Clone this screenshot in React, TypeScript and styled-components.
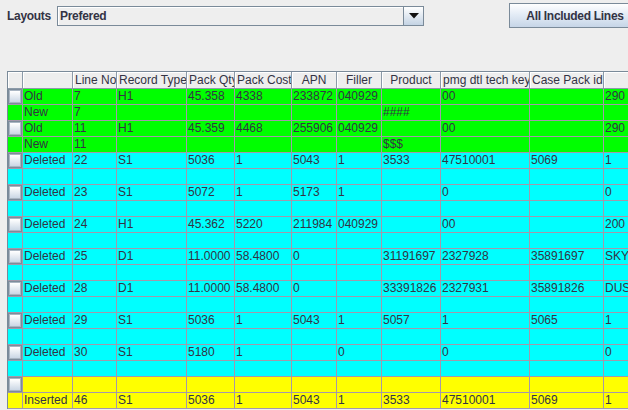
import React from "react";
import styled, { createGlobalStyle } from "styled-components";

const GlobalStyle = createGlobalStyle`
  html, body {
    margin: 0;
    padding: 0;
    background: #eeeeee;
    overflow: hidden;
    width: 628px;
    height: 410px;
  }
  body {
    font-family: "Liberation Sans", Arial, sans-serif;
    font-size: 12px;
    color: #333333;
  }
`;

const Page = styled.div`
  display: flex;
  flex-direction: column;
  width: 628px;
  height: 410px;
  overflow: hidden;
`;

const TopBar = styled.div`
  display: flex;
  align-items: center;
  height: 31px;
  padding-left: 7px;
`;

const Label = styled.span`
  font-weight: bold;
  font-size: 12px;
  letter-spacing: -0.3px;
  color: #333344;
  width: 50px;
  flex-shrink: 0;
`;

const Combo = styled.div`
  display: flex;
  width: 367px;
  height: 20px;
  box-sizing: border-box;
  border: 1px solid #7a8a99;
  flex-shrink: 0;
`;

const ComboField = styled.div`
  flex: 1;
  display: flex;
  align-items: center;
  padding-left: 2px;
  background: #eeeeee;
  box-shadow: inset 1px 1px 0 #ffffff;
  font-weight: bold;
  letter-spacing: -0.3px;
  color: #333344;
  border-right: 1px solid #7a8a99;
`;

const ComboArrow = styled.div`
  width: 19px;
  display: flex;
  align-items: center;
  justify-content: center;
  background: linear-gradient(#ffffff, #c4d3e4);
`;

const Spacer = styled.div`
  width: 85px;
  flex-shrink: 0;
`;

const Button = styled.div`
  width: 132px;
  height: 25px;
  box-sizing: border-box;
  border: 1px solid #7a8a99;
  background: linear-gradient(#ffffff 0%, #e4ecf6 45%, #c6d5e7 100%);
  display: flex;
  align-items: center;
  justify-content: center;
  font-weight: bold;
  letter-spacing: -0.3px;
  color: #333344;
  flex-shrink: 0;
  white-space: nowrap;
`;

const TableWrap = styled.div`
  margin-top: 40px;
  margin-left: 7px;
  border-left: 1px solid #7a8a99;
  border-top: 1px solid #7a8a99;
  display: flex;
  flex-direction: column;
  width: 700px;
`;

const COLS = "15px 50px 44px 70px 48px 57px 45px 45px 59px 89px 74px 80px";

const HeaderRow = styled.div`
  display: grid;
  grid-template-columns: ${COLS};
  height: 17px;
`;

const HeaderCell = styled.div<{ $align?: string }>`
  box-sizing: border-box;
  height: 17px;
  border-right: 1px solid #8c9aa8;
  border-bottom: 1px solid #8c9aa8;
  box-shadow: inset 1px 1px 0 #ffffff;
  background: #eeeeee;
  display: flex;
  align-items: center;
  justify-content: ${(p) => (p.$align === "left" ? "flex-start" : "center")};
  padding-left: ${(p) => (p.$align === "left" ? "2px" : "0")};
  white-space: nowrap;
  overflow: hidden;
  color: #333344;
  font-size: 12px;
`;

const Row = styled.div<{ $bg: string }>`
  display: grid;
  grid-template-columns: ${COLS};
  height: 16px;
  background: ${(p) => p.$bg};
`;

const Cell = styled.div`
  box-sizing: border-box;
  height: 16px;
  border-right: 1px solid #a398aa;
  border-bottom: 1px solid #a398aa;
  padding-left: 1px;
  line-height: 15px;
  white-space: nowrap;
  overflow: hidden;
  color: #333344;
  font-size: 12px;
`;

const CheckCell = styled.div`
  box-sizing: border-box;
  height: 16px;
  border-right: 1px solid #a398aa;
  border-bottom: 1px solid #a398aa;
  display: flex;
`;

const Check = styled.div`
  flex: 1;
  box-sizing: border-box;
  border: 1px solid #7d8c9b;
  box-shadow: inset 0 0 0 1px #a9b5c2;
  background: linear-gradient(#ffffff 10%, #c6d3e2 100%);
`;

const GREEN = "#00ff00";
const CYAN = "#00ffff";
const YELLOW = "#ffff00";

type RowData = { bg: string; check: boolean; cells: string[] };

const headers: { label: string; align?: string }[] = [
  { label: "" },
  { label: "" },
  { label: "Line No", align: "left" },
  { label: "Record Type", align: "left" },
  { label: "Pack Qty", align: "left" },
  { label: "Pack Cost", align: "left" },
  { label: "APN" },
  { label: "Filler" },
  { label: "Product" },
  { label: "pmg dtl tech key", align: "left" },
  { label: "Case Pack id", align: "left" },
  { label: "" },
];

const blank = (bg: string, check = false): RowData => ({
  bg,
  check,
  cells: ["", "", "", "", "", "", "", "", "", "", ""],
});

const rows: RowData[] = [
  { bg: GREEN, check: true, cells: ["Old", "7", "H1", "45.358", "4338", "233872", "040929", "", "00", "", "290"] },
  { bg: GREEN, check: false, cells: ["New", "7", "", "", "", "", "", "####", "", "", ""] },
  { bg: GREEN, check: true, cells: ["Old", "11", "H1", "45.359", "4468", "255906", "040929", "", "00", "", "290"] },
  { bg: GREEN, check: false, cells: ["New", "11", "", "", "", "", "", "$$$", "", "", ""] },
  { bg: CYAN, check: true, cells: ["Deleted", "22", "S1", "5036", "1", "5043", "1", "3533", "47510001", "5069", "1"] },
  blank(CYAN),
  { bg: CYAN, check: true, cells: ["Deleted", "23", "S1", "5072", "1", "5173", "1", "", "0", "", "0"] },
  blank(CYAN),
  { bg: CYAN, check: true, cells: ["Deleted", "24", "H1", "45.362", "5220", "211984", "040929", "", "00", "", "200"] },
  blank(CYAN),
  { bg: CYAN, check: true, cells: ["Deleted", "25", "D1", "11.0000", "58.4800", "0", "", "31191697", "2327928", "35891697", "SKYWAY"] },
  blank(CYAN),
  { bg: CYAN, check: true, cells: ["Deleted", "28", "D1", "11.0000", "58.4800", "0", "", "33391826", "2327931", "35891826", "DUSTIN"] },
  blank(CYAN),
  { bg: CYAN, check: true, cells: ["Deleted", "29", "S1", "5036", "1", "5043", "1", "5057", "1", "5065", "1"] },
  blank(CYAN),
  { bg: CYAN, check: true, cells: ["Deleted", "30", "S1", "5180", "1", "", "0", "", "0", "", "0"] },
  blank(CYAN),
  blank(YELLOW, true),
  { bg: YELLOW, check: false, cells: ["Inserted", "46", "S1", "5036", "1", "5043", "1", "3533", "47510001", "5069", "1"] },
];

const ArrowIcon = () => (
  <svg width="10" height="6" viewBox="0 0 10 6">
    <path d="M0 0 H10 L5 5.5 Z" fill="#111111" />
  </svg>
);

export default function App() {
  return (
    <Page>
      <GlobalStyle />
      <TopBar>
        <Label>Layouts</Label>
        <Combo>
          <ComboField>Prefered</ComboField>
          <ComboArrow>
            <ArrowIcon />
          </ComboArrow>
        </Combo>
        <Spacer />
        <Button>All Included Lines</Button>
      </TopBar>
      <TableWrap>
        <HeaderRow>
          {headers.map((h, i) => (
            <HeaderCell key={i} $align={h.align}>
              {h.label}
            </HeaderCell>
          ))}
        </HeaderRow>
        {rows.map((r, i) => (
          <Row key={i} $bg={r.bg}>
            <CheckCell>{r.check && <Check />}</CheckCell>
            {r.cells.map((c, j) => (
              <Cell key={j}>{c}</Cell>
            ))}
          </Row>
        ))}
      </TableWrap>
    </Page>
  );
}
